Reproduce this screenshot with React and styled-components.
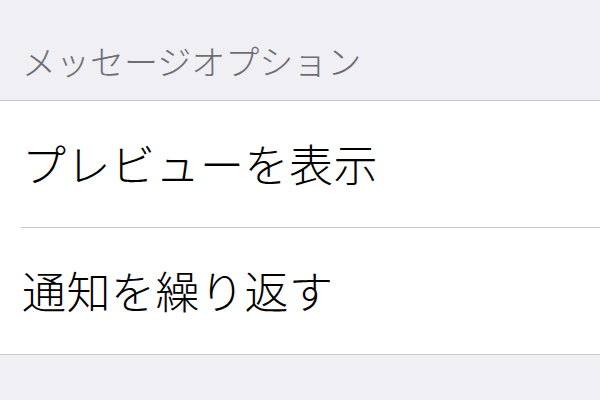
import React from "react";
import styled, { createGlobalStyle } from "styled-components";

const GlobalStyle = createGlobalStyle`
  html, body {
    margin: 0;
    padding: 0;
    background: #efeff4;
  }
  body {
    font-family: "Noto Sans CJK JP", "Noto Sans", sans-serif;
  }
`;

const Page = styled.div`
  width: 600px;
  height: 400px;
  overflow: hidden;
  background: #efeff4;
`;

const SectionHeader = styled.div`
  height: 101px;
  box-sizing: border-box;
  padding: 21px 0 0 22px;
  display: flex;
  align-items: center;
  color: #6d6d72;
  font-size: 34px;
  font-weight: 300;
  line-height: 1;
  border-bottom: 1px solid #c8c7cc;
`;

const Group = styled.div`
  background: #fff;
  border-bottom: 1px solid #c8c7cc;
`;

const Row = styled.div`
  height: 126px;
  display: flex;
  align-items: center;
  padding: 0 0 3px 22px;
  box-sizing: border-box;
  color: #000;
  font-size: 44px;
  font-weight: 300;
  letter-spacing: 0.5px;
  line-height: 1;
`;

const Divider = styled.div`
  height: 1px;
  margin-left: 21px;
  background: #c8c7cc;
`;

const rows = ["プレビューを表示", "通知を繰り返す"];

export default function App() {
  return (
    <Page>
      <GlobalStyle />
      <SectionHeader>メッセージオプション</SectionHeader>
      <Group>
        {rows.map((label, i) => (
          <React.Fragment key={label}>
            {i > 0 && <Divider />}
            <Row>{label}</Row>
          </React.Fragment>
        ))}
      </Group>
    </Page>
  );
}
